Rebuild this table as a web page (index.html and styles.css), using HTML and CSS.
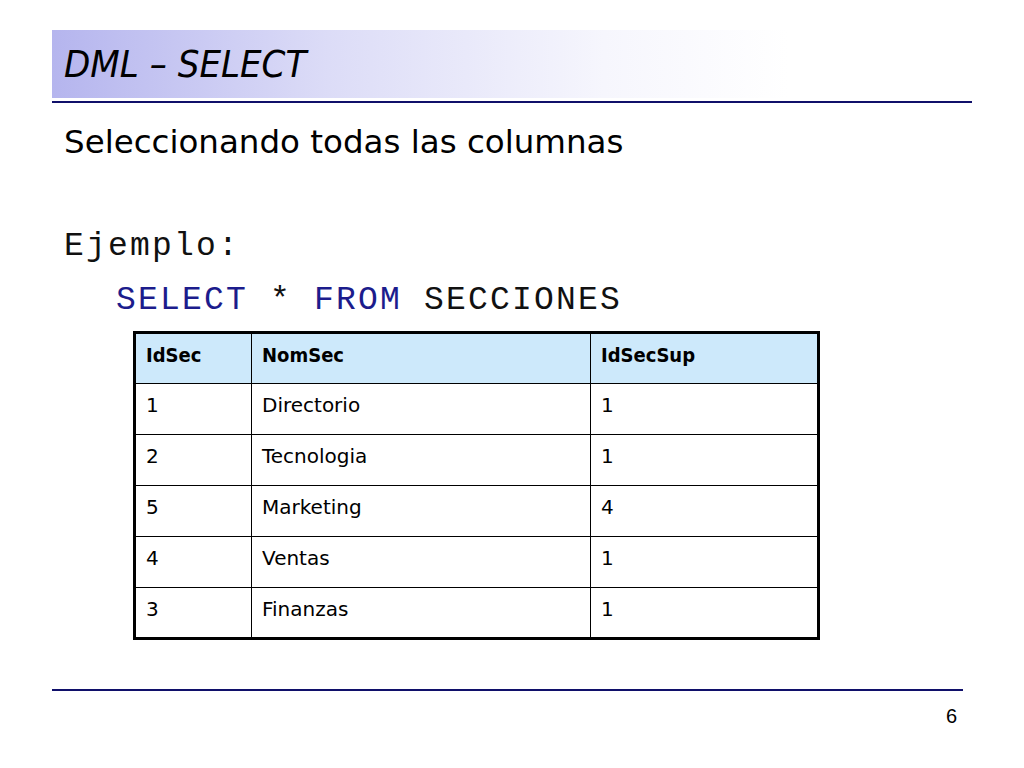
FILE: index.html
```html
<!DOCTYPE html>
<html lang="es">
<head>
<meta charset="utf-8">
<title>DML – SELECT</title>
<link rel="stylesheet" href="styles.css">
</head>
<body>
<div class="slide">
  <header class="head">
    <div class="title-band"><h1 class="title">DML – SELECT</h1></div>
    <div class="rule"></div>
  </header>
  <h2 class="subtitle">Seleccionando todas las columnas</h2>
  <p class="code label">Ejemplo:</p>
  <p class="code query"><span class="kw">SELECT</span> * <span class="kw">FROM</span> SECCIONES</p>
  <table class="grid">
    <thead>
      <tr><th class="c1">IdSec</th><th class="c2">NomSec</th><th class="c3">IdSecSup</th></tr>
    </thead>
    <tbody>
      <tr><td>1</td><td>Directorio</td><td>1</td></tr>
      <tr><td>2</td><td>Tecnologia</td><td>1</td></tr>
      <tr><td>5</td><td>Marketing</td><td>4</td></tr>
      <tr><td>4</td><td>Ventas</td><td>1</td></tr>
      <tr><td>3</td><td>Finanzas</td><td>1</td></tr>
    </tbody>
  </table>
  <footer class="foot">
    <div class="rule rule-bottom"></div>
    <div class="page">6</div>
  </footer>
</div>
</body>
</html>
```

FILE: styles.css
```css
html, body {
  margin: 0;
  padding: 0;
  background: #ffffff;
}
.slide {
  width: 1024px;
  height: 768px;
  position: relative;
  overflow: hidden;
  font-family: "DejaVu Sans", sans-serif;
  color: #000;
}
.head {
  padding: 30px 52px 0 52px;
}
.title-band {
  height: 68px;
  background: linear-gradient(to right, #b5b5ee 0%, #dcdcf7 30%, #f6f6fd 60%, #ffffff 80%);
  display: flex;
  align-items: center;
}
.title {
  margin: 0 0 0 12px;
  font-family: "DejaVu Sans Condensed", "DejaVu Sans", sans-serif;
  font-style: italic;
  font-weight: normal;
  font-size: 38px;
  color: #000;
}
.rule {
  height: 2px;
  background: #10106a;
  margin-top: 3px;
}
.subtitle {
  margin: 19px 0 0 64px;
  font-family: "DejaVu Sans", sans-serif;
  font-weight: normal;
  font-size: 32.5px;
  line-height: 40px;
}
.code {
  font-family: "Liberation Mono", "Courier New", monospace;
  font-size: 33px;
  letter-spacing: 2.2px;
  line-height: 54px;
  margin: 0;
  color: #111;
}
.label {
  margin: 58px 0 0 64px;
}
.query {
  margin: 0 0 0 116px;
}
.kw {
  color: #1c1c8c;
}
.grid {
  margin: 3px 0 0 133px;
  border-collapse: collapse;
  border: 3px solid #000;
  font-family: "DejaVu Sans", sans-serif;
  font-size: 20px;
}
.grid th, .grid td {
  border: 1px solid #000;
  height: 51px;
  box-sizing: border-box;
  padding: 8px 10px 0 10px;
  vertical-align: top;
  text-align: left;
  line-height: 26px;
}
.grid th {
  background: #cde9fb;
  font-family: "DejaVu Sans Condensed", "DejaVu Sans", sans-serif;
  font-weight: bold;
}
.c1 { width: 117px; }
.c2 { width: 339px; }
.c3 { width: 228px; }
.foot {
  position: absolute;
  left: 52px;
  top: 689px;
  width: 911px;
}
.rule-bottom {
  margin-top: 0;
}
.page {
  text-align: right;
  font-family: "Liberation Sans", Arial, sans-serif;
  font-size: 20px;
  margin-top: 14px;
  margin-right: 6px;
}
```
